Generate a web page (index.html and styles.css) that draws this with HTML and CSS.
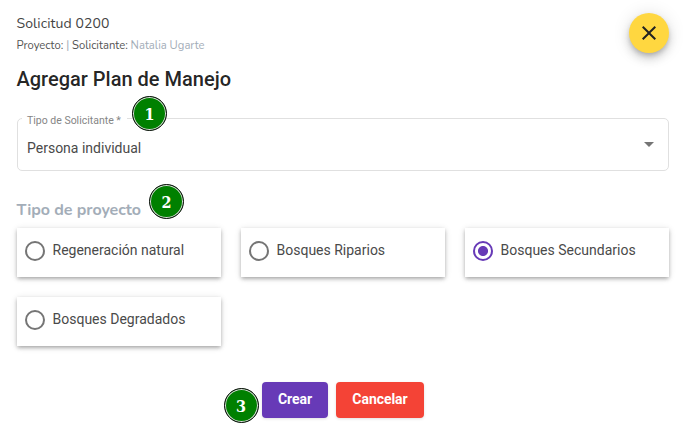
FILE: index.html
```html
<!DOCTYPE html>
<html lang="es">
<head>
<meta charset="utf-8">
<title>Agregar Plan de Manejo</title>
<link rel="stylesheet" href="styles.css">
</head>
<body>
<main class="page">
  <header class="header">
    <div>
      <div class="request"><span>Solicitud 0200</span></div>
      <div class="meta"><span>Proyecto:</span> <span class="muted">|</span> <span>Solicitante:</span> <span class="muted">Natalia Ugarte</span></div>
    </div>
    <button class="close" aria-label="Cerrar">
      <svg width="24" height="24" viewBox="0 0 24 24"><path fill="#222" d="M19 6.41 17.59 5 12 10.59 6.41 5 5 6.41 10.59 12 5 17.59 6.41 19 12 13.41 17.59 19 19 17.59 13.41 12z"/></svg>
    </button>
  </header>
  <h1 class="title">Agregar Plan de Manejo</h1>
  <div class="select">
    <span class="select-label">Tipo de Solicitante *</span>
    <span class="select-value">Persona individual</span>
    <span class="arrow"></span>
    <span class="badge badge-one">1</span>
  </div>
  <h2 class="section">Tipo de proyecto<span class="badge badge-two">2</span></h2>
  <div class="cards">
    <label class="card"><span class="radio"></span><span>Regeneración natural</span></label>
    <label class="card"><span class="radio"></span><span>Bosques Riparios</span></label>
    <label class="card"><span class="radio checked"></span><span>Bosques Secundarios</span></label>
    <label class="card"><span class="radio"></span><span>Bosques Degradados</span></label>
  </div>
  <div class="actions">
    <button class="btn create">Crear</button>
    <button class="btn cancel">Cancelar</button>
    <span class="badge badge-three">3</span>
  </div>
</main>
</body>
</html>
```
FILE: styles.css
```css
* { box-sizing: border-box; }
body { margin: 0; background: #fff; font-family: Roboto, sans-serif; color: rgba(0, 0, 0, .87); overflow: hidden; }
.page { width: 687px; height: 434px; padding: 13px 18px 0 16.5px; }
.header { display: flex; justify-content: space-between; height: 47px; }
.request { font: 14px/20px Nunito, "Noto Sans", sans-serif; color: #444; white-space: nowrap; letter-spacing: .1px; padding-top: 1px; }
.meta { font: 11.25px/18px Nunito, "Noto Sans", sans-serif; color: #555; margin-top: 3px; white-space: nowrap; }
.muted { color: #a3adb8; }
.close { width: 40px; height: 40px; padding: 8px; border: 0; border-radius: 50%; background: #ffd740; box-shadow: 0 3px 5px -1px rgba(0,0,0,.2), 0 6px 10px rgba(0,0,0,.14), 0 1px 18px rgba(0,0,0,.12); }
.close svg { display: block; }
.title { margin: 6px 0 0; font-size: 20px; line-height: 26px; font-weight: 500; white-space: nowrap; }
.select { position: relative; display: flex; align-items: center; justify-content: space-between; height: 53px; margin-top: 26px; padding: 7px 14px 0 9.5px; border: 1px solid #e0e0e0; border-radius: 5px; }
.select-label { position: absolute; left: 4.5px; top: -5px; padding: 0 6px 0 5px; background: #fff; font-size: 10.5px; line-height: 14px; color: #858585; white-space: nowrap; }
.select-value { font-size: 14px; color: #4a4a4a; }
.arrow { border: 5px solid transparent; border-top-color: #757575; border-bottom: 0; margin-top: -7px; }
.badge { position: absolute; width: 35px; height: 35px; border: 1px solid #111; border-radius: 50%; background: #008000; box-shadow: inset 0 0 0 1px #ddd; color: #fff; font: bold 16px/35px "DejaVu Serif Condensed", "DejaVu Serif", serif; text-align: center; }
.badge-one { left: 114.5px; top: -23px; }
.section { position: relative; margin: 28px 0 0; height: 29px; font: bold 16px/22px Nunito, "Noto Sans", sans-serif; letter-spacing: -.05px; color: #a3adb8; }
.badge-two { left: 132.5px; top: -15px; }
.cards { display: grid; grid-template-columns: repeat(3, 204px); gap: 20px; margin-left: .5px; }
.card { display: flex; height: 49px; padding: 13px 8px 0; background: #fff; box-shadow: 0 2px 4px -1px rgba(0,0,0,.2), 0 2px 4px rgba(0,0,0,.14), 0 1px 7px rgba(0,0,0,.12); font-size: 14px; line-height: 19px; color: #4a4a4a; }
.radio { width: 20px; height: 20px; margin-right: 7.5px; border: 2px solid #757575; border-radius: 50%; }
.checked { border-color: #673ab7; background: radial-gradient(circle, #673ab7 4.6px, transparent 5.4px); }
.actions { position: relative; display: flex; gap: 8px; margin: 36px 0 0 245.5px; }
.btn { height: 36px; padding: 0 0 1px; border: 0; border-radius: 4px; color: #fff; font: 700 14px/35px Roboto, sans-serif; letter-spacing: -.05px; box-shadow: 0 1px 3px rgba(0,0,0,.12); }
.create { width: 66px; background: #673ab7; }
.cancel { width: 88px; background: #f44336; }
.badge-three { left: -38.5px; top: 6px; }
```
